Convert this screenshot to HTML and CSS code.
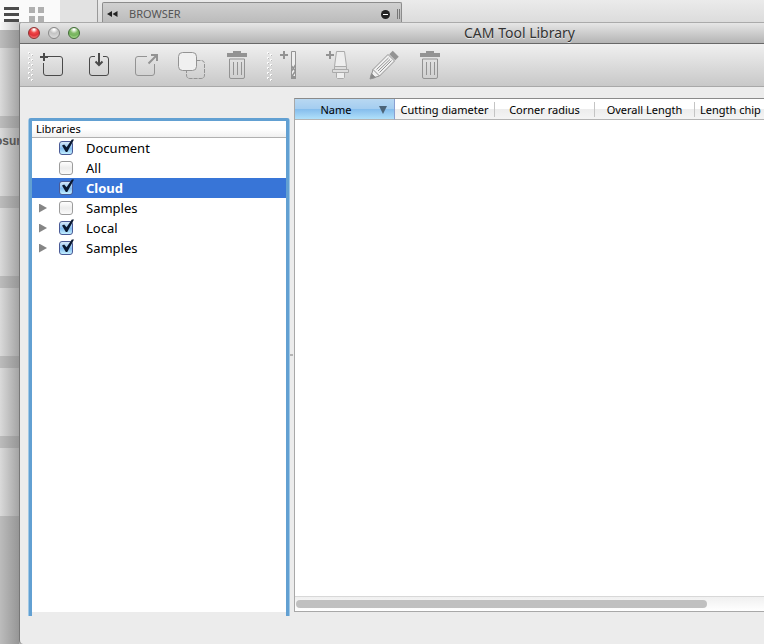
FILE: index.html
```html
<!DOCTYPE html>
<html lang="en">
<head>
    <meta charset="UTF-8">
    <meta name="viewport" content="width=device-width, initial-scale=1.0">
    <title>CAM Tool Library</title>
    <link rel="stylesheet" href="styles.css">
</head>
<body>
    <header class="app-bar">
        <div class="view-switch">
            <button aria-label="List view">
                <svg width="15" height="15"><path d="M0 1.500h15M0 7.500h15M0 13.500h15" stroke="#4c4c4c" stroke-width="3"/></svg>
            </button>
            <button aria-label="Grid view">
                <svg width="15" height="15" fill="#b0b0b0"><path d="M0 0h6v6H0zM9 0h6v6H9zM0 9h6v6H0zM9 9h6v6H9z"/></svg>
            </button>
        </div>
        <div class="app-spacer"></div>
        <div class="browser-bar">
            <svg width="11" height="6" fill="#222"><path d="M5 0v6L0 3zM10.500 0v6L5.500 3z"/></svg>
            <span class="browser-title">BROWSER</span>
            <button aria-label="Collapse browser">
                <svg width="9" height="9"><circle cx="4.500" cy="4.500" r="4.500" fill="#222"/><path d="M2 4.500h5" stroke="#fff"/></svg>
            </button>
            <span class="resize-grip"></span>
        </div>
    </header>
    <div class="desktop">
        <aside class="thumbs">
            <div class="thumb"></div>
            <div class="thumb">osur</div>
            <div class="thumb"></div>
            <div class="thumb"></div>
            <div class="thumb"></div>
            <div class="thumb"></div>
        </aside>
        <main class="window">
            <div class="title-bar">
                <button class="light red" aria-label="Close"></button>
                <button class="light grey" aria-label="Minimize"></button>
                <button class="light green" aria-label="Zoom"></button>
                <h1>CAM Tool Library</h1>
            </div>
            <div class="toolbar">
                <div class="tool-group">
                    <svg class="grip" width="6" height="32"><use href="#dots"/></svg>
                    <div class="tools">
                        <button aria-label="New library">
                            <svg class="icon dark" width="32" height="32">
                                <path d="M12 7.500H24q2.500 0 2.500 2.500V24q0 2.500-2.500 2.500H10q-2.500 0-2.500-2.500V14"/>
                                <path d="M4 8h8M8 4v8" stroke-width="2"/>
                            </svg>
                        </button>
                        <button aria-label="Import library">
                            <svg class="icon dark" width="32" height="32">
                                <path d="M13 7.500H10Q7.500 7.500 7.500 10V24q0 2.500 2.500 2.500H24q2.500 0 2.500-2.500V10q0-2.500-2.500-2.500H21"/>
                                <path d="M17 4v12M13.500 12.500l3.500 3.500 3.500-3.500" stroke-width="2"/>
                            </svg>
                        </button>
                        <button aria-label="Export library">
                            <svg class="icon" width="32" height="32">
                                <path d="M19 7.500H10Q7.500 7.500 7.500 10V24q0 2.500 2.500 2.500H24q2.500 0 2.500-2.500V15"/>
                                <path d="M20.500 14.500l8-8M23 6h6v6" stroke-width="2"/>
                            </svg>
                        </button>
                        <button aria-label="Duplicate">
                            <svg class="icon" width="32" height="32">
                                <path d="M22.500 11.500H27q3.500 0 3.500 3.500V26q0 3.500-3.500 3.500H16q-3.500 0-3.500-3.500V21.500" stroke-dasharray="4 1"/>
                                <rect x="4.500" y="3.500" width="18" height="18" rx="4" fill="#f0f0f0"/>
                            </svg>
                        </button>
                        <button aria-label="Delete library">
                            <svg class="icon" width="32" height="32"><use href="#trash"/></svg>
                        </button>
                    </div>
                </div>
                <div class="tool-group">
                    <svg class="grip" width="6" height="32">
                        <g id="dots">
                            <path d="M2 3v28M5 5v28" stroke="#fafafa" stroke-width="2" stroke-dasharray="2 3"/>
                            <path d="M2.500 4v28M5.500 6v26" stroke="#b8b8b8" stroke-dasharray="1 4"/>
                        </g>
                    </svg>
                    <div class="tools">
                        <button aria-label="New tool">
                            <svg class="icon" width="32" height="32">
                                <path d="M5 6h8M9 2v8" stroke-width="2"/>
                                <path d="M16.500 2.500h4v27h-4z" fill="#eee"/>
                                <path d="M20.500 16l-4 6M20.500 22l-4 6M16.500 17l4 5" stroke-width="1.500"/>
                                <path d="M16 28.500h5" stroke-width="3"/>
                            </svg>
                        </button>
                        <button aria-label="New holder">
                            <svg class="icon" width="32" height="32">
                                <path d="M5 6h8M9 2v8" stroke-width="2"/>
                                <path d="M15.500 2.500h8l2 15h-12z" fill="#eee" stroke="#aaa"/>
                                <path d="M15.500 23.500h8v5l-1 1h-6l-1-1z" fill="#eee" stroke="#aaa"/>
                                <path d="M13.500 17.500h12v3h-12zM11.500 20.500h16v3h-16z" fill="#ddd" stroke="#aaa"/>
                            </svg>
                        </button>
                        <button aria-label="Edit tool">
                            <svg class="icon" width="32" height="32">
                                <path d="M3.500 29.500L6 20.500 21 5.500l6.500 6.500-15 15z" fill="#f0f0f0"/>
                                <path d="M6 20.500l6.500 6.500M9.500 20.500L21.500 9M11 22L23 10.500M12.500 23.500l12-12"/>
                                <path d="M3 30l1.500-5.500 4 4z" fill="#888"/>
                                <path d="M24 3.500l6 6" stroke-width="5"/>
                            </svg>
                        </button>
                        <button aria-label="Delete tool">
                            <svg class="icon" width="32" height="32">
                                <g id="trash">
                                    <path d="M7 6h20" stroke-width="4"/>
                                    <path d="M13 3h8" stroke-width="2"/>
                                    <path d="M9.500 10v18q0 1.500 1.500 1.500h12q1.500 0 1.500-1.500V10zM13.500 13v13M17.500 13v13M21.500 13v13"/>
                                </g>
                            </svg>
                        </button>
                    </div>
                </div>
            </div>
            <div class="content">
                <section class="libraries">
                    <h2>Libraries</h2>
                    <ul>
                        <li><label><input type="checkbox" checked>Document</label></li>
                        <li><label><input type="checkbox">All</label></li>
                        <li class="selected"><label><input type="checkbox" checked>Cloud</label></li>
                        <li><button class="expand" aria-label="Expand"></button><label><input type="checkbox">Samples</label></li>
                        <li><button class="expand" aria-label="Expand"></button><label><input type="checkbox" checked>Local</label></li>
                        <li><button class="expand" aria-label="Expand"></button><label><input type="checkbox" checked>Samples</label></li>
                    </ul>
                </section>
                <div class="splitter"></div>
                <section class="tool-list">
                    <table>
                        <thead>
                            <tr>
                                <th class="sorted">Name</th>
                                <th>Cutting diameter</th>
                                <th>Corner radius</th>
                                <th>Overall Length</th>
                                <th class="clipped">Length chip</th>
                                <th></th>
                            </tr>
                        </thead>
                    </table>
                    <div class="scroll-track"><div class="scroll-thumb"></div></div>
                </section>
            </div>
        </main>
    </div>
</body>
</html>
```

FILE: styles.css
```css
* {
    box-sizing: border-box;
}

body {
    margin: 0;
    height: 100vh;
    display: flex;
    flex-direction: column;
    overflow: hidden;
    background: #b4b4b4;
    color: #000;
    font-family: "Lucida Grande", "Noto Sans", sans-serif;
    font-size: 13px;
}

button {
    padding: 0;
    border: none;
    background: none;
    display: block;
}

svg {
    display: block;
}

/* application behind the window */
.app-bar {
    display: flex;
    height: 22px;
    background: linear-gradient(#ebebeb, #dcdcdc);
}

.view-switch {
    display: flex;
    gap: 10px;
    width: 60px;
    padding: 7px 4px 0;
    background: #fafafa;
}

.app-spacer {
    width: 38px;
    margin-right: 4px;
    border-right: 1px solid #999;
    background: #e2e2e2;
}

.browser-bar {
    display: flex;
    align-items: center;
    width: 300px;
    margin-top: 2px;
    padding: 3px 1px 0 4px;
    border: 1px solid #8c8c8c;
    border-bottom: none;
    border-radius: 2px 2px 0 0;
    background: linear-gradient(#d0d0d0, #bcbcbc);
}

.browser-title {
    flex: 1;
    margin-left: 11px;
    color: #555;
    font-size: 11px;
    line-height: 16px;
}

.resize-grip {
    width: 3px;
    height: 10px;
    margin-left: 7px;
    border: 1px solid #777;
    border-width: 0 1px;
}

.desktop {
    flex: 1;
    display: flex;
    min-height: 0;
}

.thumbs {
    flex: none;
    display: flex;
    flex-direction: column;
    gap: 12px;
    width: 19px;
    padding-top: 26px;
    overflow: hidden;
    background: linear-gradient(90deg, transparent, rgba(0, 0, 0, 0.2)), linear-gradient(#f8f8f8 8px, #bcbcbc 8px);
}

.thumb {
    height: 68px;
    background: linear-gradient(90deg, #dadada, #a4a4a4);
    color: #555;
    font: bold 12px/26px "Liberation Sans", sans-serif;
    text-indent: -5px;
}

/* the window runs past the right edge of the screen */
.window {
    flex: none;
    display: flex;
    flex-direction: column;
    width: calc(100% + 236px);
    border-left: 1px solid #777;
    border-radius: 4px 0 0 4px;
    background: #ececec;
    overflow: hidden;
}

.title-bar {
    display: flex;
    align-items: center;
    gap: 8px;
    height: 22px;
    padding-left: 8px;
    border-top: 1px solid #aaa;
    border-bottom: 1px solid #686868;
    background: linear-gradient(#e6e6e6, #b4b4b4);
}

.title-bar h1 {
    flex: 1;
    margin: 0 68px 0 0;
    color: #333;
    font-size: 14px;
    font-weight: normal;
    line-height: 20px;
    text-align: center;
    text-shadow: 0 1px 0 #e8e8e8;
}

.light {
    width: 12px;
    height: 12px;
    border: 1px solid #888;
    border-radius: 50%;
}

.red {
    border-color: #8c3030;
    background: radial-gradient(circle at 50% 15%, #fff 5%, #f04848 35%, #e03038 60%, #ff9a94);
}

.grey {
    background: radial-gradient(circle at 50% 15%, #fff 5%, #c4c4c4 40%, #e4e4e4);
}

.green {
    border-color: #3f6a34;
    background: radial-gradient(circle at 50% 15%, #fff 5%, #82ba68 40%, #74b45c 60%, #c4f0a8);
}

.toolbar {
    display: flex;
    gap: 14px;
    height: 43px;
    padding: 5px 7px;
    border-bottom: 1px solid #a8a8a8;
    background: linear-gradient(#f0f0f0, #c8c8c8);
}

.tool-group {
    display: flex;
    gap: 3px;
}

.tools {
    display: flex;
    gap: 14px;
}

.icon {
    fill: none;
    stroke: #939393;
}

.icon.dark {
    stroke: #4a4a4a;
}

.content {
    flex: 1;
    display: flex;
    min-height: 0;
    padding: 11px 0 28px 8px;
}

.libraries {
    width: 262px;
    margin-top: 20px;
    padding: 3px 4px 4px;
    border-radius: 3px 3px 0 0;
    background:
        linear-gradient(#fff, #fff) content-box,
        linear-gradient(#ececec, #ececec) center bottom / 254px 4px no-repeat,
        linear-gradient(90deg, #a0c8e6 1px, #62a0d2 1px, #62a0d2 261px, #a0c8e6 261px);
}

.libraries h2 {
    margin: 0;
    padding-left: 4px;
    border-bottom: 1px solid #b0b0b0;
    background: linear-gradient(#fff 50%, #f0f0f0);
    font-size: 11px;
    font-weight: normal;
    line-height: 16px;
}

.libraries ul {
    margin: 0;
    padding: 0;
    list-style: none;
}

.libraries li {
    display: flex;
    align-items: center;
    height: 20px;
    padding-left: 7px;
}

.libraries label {
    display: flex;
    align-items: center;
    gap: 13px;
    margin-left: auto;
    width: 227px;
    line-height: 20px;
}

.libraries .selected {
    background: #3875d7;
    color: #fff;
    font-weight: bold;
}

.expand {
    width: 8px;
    height: 9px;
    background: #858585;
    clip-path: polygon(0 0, 100% 50%, 0 100%);
}

input[type="checkbox"] {
    appearance: none;
    position: relative;
    width: 14px;
    height: 14px;
    margin: 0;
    border: 1px solid #9c9c9c;
    border-radius: 3px;
    background: linear-gradient(#fff, #ececec 50%, #fafafa);
}

input[type="checkbox"]:checked {
    border-color: #4a5a96;
    background: linear-gradient(#d8eafa, #84bdf0 55%, #c4f0ff);
}

input[type="checkbox"]:checked::after {
    content: "";
    position: absolute;
    top: -3px;
    left: 2px;
    width: 12px;
    height: 13px;
    background: #0a1830;
    clip-path: polygon(0 50%, 18% 42%, 38% 64%, 82% 4%, 100% 4%, 44% 100%, 32% 100%);
}

.splitter {
    width: 4px;
    display: flex;
    align-items: center;
}

.splitter::before {
    content: "";
    width: 3px;
    height: 2px;
    margin-bottom: 4px;
    background: #b4b4b4;
}

.tool-list {
    flex: 1;
    display: flex;
    flex-direction: column;
    justify-content: space-between;
    margin-bottom: 4px;
    border: 1px solid #a8a8a8;
    border-top-color: #8a8a8a;
    background: #fff;
}

table {
    width: 100%;
    table-layout: fixed;
    border-spacing: 0;
}

th {
    width: 100px;
    height: 21px;
    padding: 1px 1px 0 0;
    border-bottom: 1px solid #b4b4b4;
    background: linear-gradient(#c4c4c4, #c4c4c4) right 3px / 1px 15px no-repeat, linear-gradient(#fff 50%, #ececec 50%, #f4f4f4);
    font-size: 11px;
    font-weight: normal;
    line-height: 19px;
    white-space: nowrap;
}

th:last-child {
    width: auto;
}

th.clipped {
    padding-left: 5px;
    text-align: left;
}

th.sorted {
    position: relative;
    padding-right: 17px;
    border-right: 1px solid #8a9fd0;
    background: linear-gradient(#b8d8f2, #a4cdf0 50%, #84bcec 50%, #b0e0fa);
}

th.sorted::after {
    content: "";
    position: absolute;
    top: 7px;
    right: 7px;
    width: 8px;
    height: 8px;
    background: #4c6478;
    clip-path: polygon(0 0, 100% 0, 50% 100%);
}

.scroll-track {
    height: 15px;
    padding: 3px 1px;
    border-top: 1px solid #d8d8d8;
    background: linear-gradient(#f0f0f0, #fff);
}

.scroll-thumb {
    width: 57%;
    height: 8px;
    border-radius: 4px;
    background: #c0c0c0;
}
```
